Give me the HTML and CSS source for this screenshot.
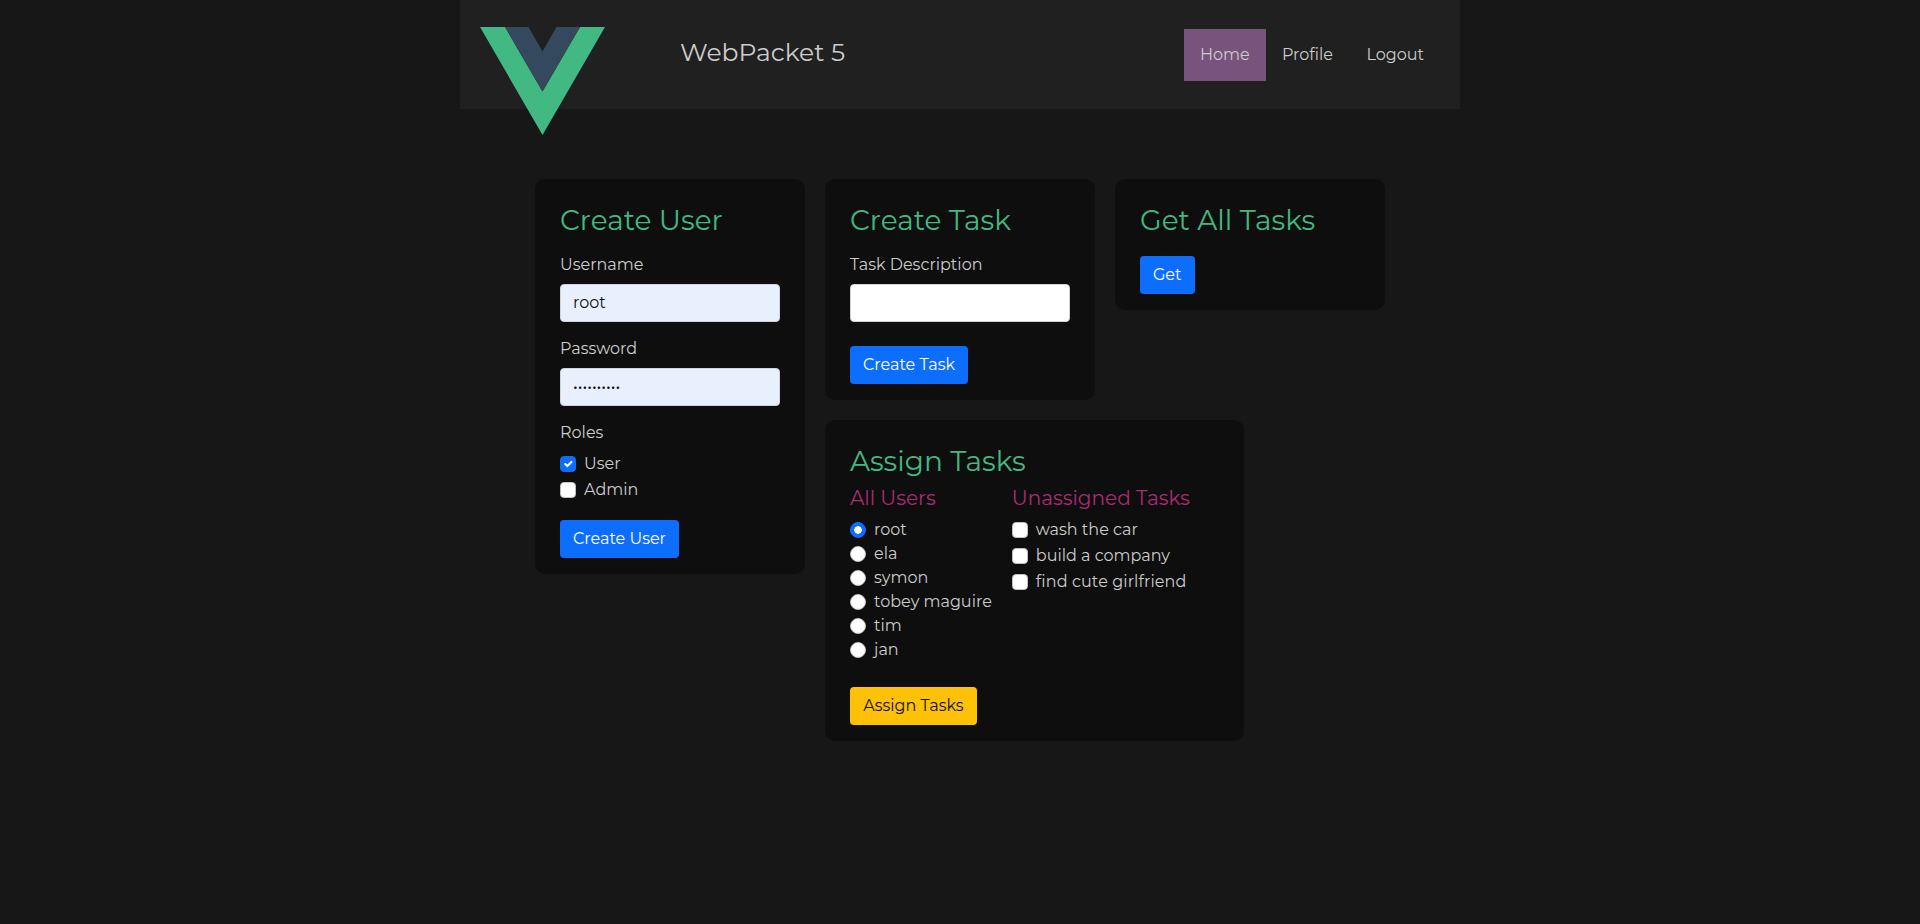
FILE: index.html
```html
<!DOCTYPE html>
<html lang="en">
<head>
<meta charset="utf-8">
<title>WebPacket 5</title>
<link rel="stylesheet" href="styles.css">
</head>
<body>
<header class="header">
  <svg class="logo" viewBox="0 0 125 108" aria-label="Logo">
    <path fill="#42b883" d="M0 0h25l37.5 64.5L100 0h25L62.500 108z"/>
    <path fill="#35495e" d="M25 0h23.500l14 24.500L76.500 0H100L62.500 64.500z"/>
  </svg>
  <h1 class="brand">WebPacket 5</h1>
  <nav class="nav">
    <a class="nav-link active">Home</a>
    <a class="nav-link profile">Profile</a>
    <a class="nav-link">Logout</a>
  </nav>
</header>
<main class="board">
  <section class="card create-user">
    <h2>Create User</h2>
    <label class="label">Username</label>
    <input class="field filled" type="text" value="root">
    <label class="label">Password</label>
    <input class="field filled" type="password" value="passw0rd12">
    <p class="label">Roles</p>
    <div class="checks">
      <label class="option"><input class="box" type="checkbox" checked>User</label>
      <label class="option"><input class="box" type="checkbox">Admin</label>
    </div>
    <button class="btn primary submit-user">Create User</button>
  </section>
  <div class="right">
    <div class="top">
      <section class="card">
        <h2>Create Task</h2>
        <label class="label">Task Description</label>
        <input class="field" type="text">
        <button class="btn primary create">Create Task</button>
      </section>
      <section class="card">
        <h2>Get All Tasks</h2>
        <button class="btn primary get">Get</button>
      </section>
    </div>
    <section class="card assign">
      <h2>Assign Tasks</h2>
      <div class="lists">
        <div class="radios">
          <h3>All Users</h3>
          <label class="option"><input class="radio" type="radio" name="u" checked>root</label>
          <label class="option"><input class="radio" type="radio" name="u">ela</label>
          <label class="option"><input class="radio" type="radio" name="u">symon</label>
          <label class="option"><input class="radio" type="radio" name="u">tobey maguire</label>
          <label class="option"><input class="radio" type="radio" name="u">tim</label>
          <label class="option"><input class="radio" type="radio" name="u">jan</label>
        </div>
        <div>
          <h3>Unassigned Tasks</h3>
          <div class="checks">
            <label class="option"><input class="box" type="checkbox">wash the car</label>
            <label class="option"><input class="box" type="checkbox">build a company</label>
            <label class="option spaced"><input class="box" type="checkbox">find cute girlfriend</label>
          </div>
        </div>
      </div>
      <button class="btn warning">Assign Tasks</button>
    </section>
  </div>
</main>
</body>
</html>
```
FILE: styles.css
```css
* { box-sizing: border-box; }
body {
  margin: 0;
  min-height: 100vh;
  background: #171717;
  color: #ccc;
  font: 400 16px/24px Montserrat, Inter, sans-serif;
}
h1, h2, h3, p { margin: 0; font-weight: 400; }

.header {
  width: 1000px;
  height: 109px;
  margin: 0 auto;
  padding: 0 20px;
  display: flex;
  align-items: flex-start;
  background: #202020;
}
.logo { width: 125px; height: 108px; margin-top: 27px; flex: none; }
.brand { margin: 37px 0 0 75px; font-size: 25px; line-height: 30px; }
.nav { display: flex; margin: 29px 0 0 auto; }
.nav-link { height: 52px; padding: 14px 16px; }
.active { width: 82px; background: #78547d; }
.profile { width: 84.500px; }

.board {
  width: 850px;
  margin: 70px auto 0;
  display: flex;
  align-items: flex-start;
  gap: 20px;
}
.right { display: flex; flex-direction: column; gap: 20px; }
.top { display: flex; align-items: flex-start; gap: 20px; }
.card {
  width: 270px;
  padding: 25px 25px 16px;
  border-radius: 10px;
  background: #0e0e0e;
}
.assign { width: 419px; }
h2 { color: #42b883; font-size: 28px; line-height: 33.600px; }
h3 { color: #aa2c72; font-size: 20px; line-height: 24px; margin-bottom: 8px; }

.label { display: block; margin-top: 15px; }
.field {
  display: block;
  width: 100%;
  height: 38px;
  margin-top: 7px;
  padding: 6px 12px;
  border: 1px solid #ced4da;
  border-radius: 4px;
  background: #fff;
  color: #111;
  font: inherit;
}
.filled { background: #e8f0fe; }

.checks { display: flex; flex-direction: column; gap: 2px; }
.option { display: flex; align-items: flex-start; gap: 8px; }
.spaced { letter-spacing: 0.100px; }
.box, .radio {
  appearance: none;
  width: 16px;
  height: 16px;
  margin: 4px 0 0;
  border: 1px solid #bfbfbf;
  background: #fff center / contain no-repeat;
}
.box { border-radius: 4px; }
.radio { border-radius: 50%; }
.box:checked {
  border-color: #0d6efd;
  background-color: #0d6efd;
  background-image: url("data:image/svg+xml,%3Csvg xmlns='http://www.w3.org/2000/svg' viewBox='0 0 20 20'%3E%3Cpath fill='none' stroke='%23fff' stroke-linecap='round' stroke-linejoin='round' stroke-width='3' d='M6 10l3 3l6-6'/%3E%3C/svg%3E");
}
.radio:checked {
  border-color: #0d6efd;
  background-color: #0d6efd;
  background-image: radial-gradient(circle, #fff 3.500px, transparent 4px);
}
.create-user .checks { margin-top: 7px; }
.lists { display: flex; gap: 20px; margin-top: 8px; }

.btn {
  display: block;
  height: 38px;
  padding: 6px 12px;
  border: 1px solid transparent;
  border-radius: 4px;
  font: inherit;
}
.primary { background: #0d6efd; color: #fff; }
.warning { width: 127px; margin-top: 25px; background: #ffc107; color: #111; }
.submit-user { margin-top: 18px; }
.create { margin-top: 24px; }
.get { margin-top: 18px; }
```
